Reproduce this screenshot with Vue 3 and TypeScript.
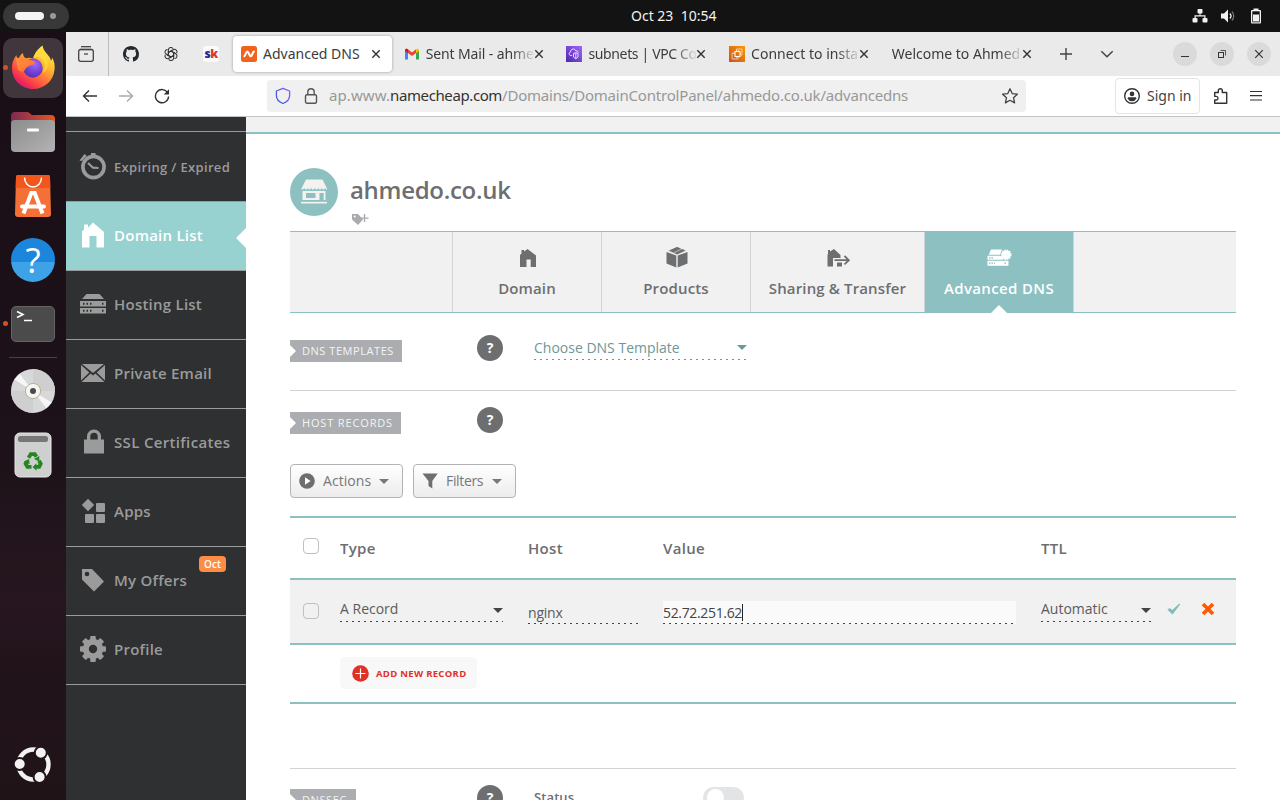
<script setup lang="ts">
import { ref } from 'vue'

interface MenuItem {
  label: string
  icon: string
  cls?: string
  badge?: string
}

interface BrowserTab {
  title: string
  icon: string
  cls: string
}

const browserTabs: BrowserTab[] = [
  { title: 'Advanced DNS', icon: 'namecheap', cls: 'active' },
  { title: 'Sent Mail - ahme', icon: 'gmail', cls: 'mail' },
  { title: 'subnets | VPC Co', icon: 'vpc', cls: 'vpc' },
  { title: 'Connect to insta', icon: 'ec2', cls: 'ec2' },
  { title: 'Welcome to Ahmed', icon: '', cls: 'plain' },
]

const menu: MenuItem[] = [
  { label: 'Expiring / Expired', icon: 'clock', cls: 'small' },
  { label: 'Domain List', icon: 'home', cls: 'current' },
  { label: 'Hosting List', icon: 'server' },
  { label: 'Private Email', icon: 'mail' },
  { label: 'SSL Certificates', icon: 'lock', cls: 'wide' },
  { label: 'Apps', icon: 'apps' },
  { label: 'My Offers', icon: 'tag', badge: 'Oct' },
  { label: 'Profile', icon: 'gear' },
]

const domainTabs = [
  { label: 'Domain', icon: 'home', cls: 'w149' },
  { label: 'Products', icon: 'box', cls: 'w149' },
  { label: 'Sharing & Transfer', icon: 'share', cls: 'w174' },
  { label: 'Advanced DNS', icon: 'dns', cls: 'w149 on' },
]

const recordValue = ref('52.72.251.62')
const teeth = [0, 45, 90, 135, 180, 225, 270, 315]
</script>

<template>
  <div class="desktop">
    <header class="topbar">
      <div class="workspaces"><i class="pill"></i><i class="dot"></i></div>
      <div class="clock">Oct 23&nbsp; 10:54</div>
      <div class="tray">
        <svg width="16" height="16" viewBox="0 0 16 16" fill="#f2f2f2">
          <rect x="5.5" y="1" width="5" height="4.5" rx="1" /><rect x="0.5" y="10" width="5" height="4.5" rx="1" /><rect x="10.5" y="10" width="5" height="4.5" rx="1" />
          <path d="M7.5 5h1v2.3h5V10h-1.2V8.6H3.7V10H2.500V7.300h5z" />
        </svg>
        <svg width="16" height="16" viewBox="0 0 16 16" fill="none">
          <path d="M1 5.500h3L8 1.500v13L4 10.500H1z" fill="#f2f2f2" />
          <path d="M9.800 5.500a3.600 3.600 0 0 1 0 5" stroke="#f2f2f2" stroke-width="1.300" />
          <path d="M11.800 3.500a6.200 6.200 0 0 1 0 9" stroke="#777" stroke-width="1.200" />
        </svg>
        <svg width="16" height="16" viewBox="0 0 16 16">
          <path d="M5.500 .5h5v1.500H12a1 1 0 0 1 1 1v11.500a1 1 0 0 1-1 1H4a1 1 0 0 1-1-1V3a1 1 0 0 1 1-1h1.500z" fill="#f2f2f2" />
          <rect x="4.300" y="3.300" width="7.400" height="11" fill="#131313" /><rect x="5" y="6.500" width="6" height="7" fill="#f2f2f2" />
        </svg>
      </div>
    </header>

    <div class="workarea">
      <nav class="dock">
        <div class="app running focused">
          <svg width="60" height="60" viewBox="0 0 60 60">
            <defs>
              <linearGradient id="fx1" x1=".85" y1=".05" x2=".2" y2=".95"><stop offset="0" stop-color="#fff44f" /><stop offset=".35" stop-color="#ffb52e" /><stop offset=".6" stop-color="#ff7139" /><stop offset=".85" stop-color="#f5334e" /><stop offset="1" stop-color="#d9127b" /></linearGradient>
              <radialGradient id="fx2" cx=".6" cy=".3" r=".8"><stop offset="0" stop-color="#a267ff" /><stop offset=".6" stop-color="#6b3fd0" /><stop offset="1" stop-color="#4d2fa5" /></radialGradient>
              <linearGradient id="fx3" x1="0" y1="0" x2="1" y2="1"><stop offset="0" stop-color="#ff9640" /><stop offset="1" stop-color="#ff6a2b" /></linearGradient>
            </defs>
            <path d="M9 30c0-6 2.500-10 4.200-13 .5 2.500 1.500 3.500 2.500 4C16 18.500 17.500 16.500 20 15c0 2.500 1 4.300 3 5.300 2.500-.8 5-.7 7.500.2C31 15 35 11 39.500 7.500c1 5.500 4.500 8 7 11.500.8 1.200 1.300 2.500 1.500 4 .6-.8 1-2 1-3.500 2.500 4 3 8 2.500 12C50.500 43 41.500 51 30 51S9 42 9 30z" fill="url(#fx1)" />
            <circle cx="30" cy="30" r="9.700" fill="url(#fx2)" />
            <path d="M13 19.500c2.500.6 5 .8 9.500 1.300 3 .4 4 1 6.500 1.700 3 .8 3.300 1.500 2.800 2.700-1 2-3.700 1.800-5.800 2.800-3 1.800-4.500 3-4.500 5-2.500 1-5 .5-7-2z" fill="url(#fx3)" />
            <path d="M30 20.300c4-3 9-1 11 3.500 1.500 3.500 1 8-1.500 11.500 4-2 6.500-7 5-13-1.200-4-4.500-7-5-13C35 12.500 31 16 30 20.300z" fill="#ffdf3e" opacity=".75" />
          </svg>
        </div>
        <div class="app">
          <svg width="46" height="42" viewBox="0 0 46 42">
            <defs><linearGradient id="fl" x1="0" y1="0" x2="1" y2="0"><stop offset="0" stop-color="#7c2a55" /><stop offset="1" stop-color="#e95420" /></linearGradient><linearGradient id="fg" x1="0" y1="0" x2="1" y2="1"><stop offset="0" stop-color="#8c8c8c" /><stop offset="1" stop-color="#b3b3b3" /></linearGradient></defs>
            <path d="M1 5a4 4 0 0 1 4-4h13l4 3h19a4 4 0 0 1 4 4v16H1z" fill="url(#fl)" />
            <rect x="1" y="9" width="44" height="32" rx="4" fill="url(#fg)" /><rect x="17" y="17.500" width="12" height="3" rx="1" fill="#fff" />
          </svg>
        </div>
        <div class="app">
          <svg width="38" height="44" viewBox="0 0 38 44">
            <path d="M4 1h30a2 2 0 0 1 2 2l1 37a3 3 0 0 1-3 3H4a3 3 0 0 1-3-3L2 3a2 2 0 0 1 2-2z" fill="#f47037" /><path d="M4 1h30a2 2 0 0 1 2 2l.3 11H1.700L2 3a2 2 0 0 1 2-2z" fill="#f2561c" />
            <path d="M10.500 3.500a8.500 9.500 0 0 0 17 0" fill="none" stroke="#fff" stroke-width="1.500" />
            <path d="M9.500 39.500 17.300 19h3.400l7.800 20.500" fill="none" stroke="#fff" stroke-width="4" /><path d="M8 32.500h22" stroke="#fff" stroke-width="4" stroke-linecap="round" />
          </svg>
        </div>
        <div class="app">
          <div class="help-app">?</div>
        </div>
        <div class="app running">
          <svg width="46" height="38" viewBox="0 0 46 38"><rect x="1.500" y="1.500" width="43" height="35" rx="4.500" fill="#4b4b4b" stroke="#656565" /><path d="m7 6.500 6 3-6 3M14 15.500h8" fill="none" stroke="#fff" stroke-width="1.600" /></svg>
        </div>
        <i class="dock-line"></i>
        <div class="app">
          <svg width="46" height="46" viewBox="0 0 46 46">
            <circle cx="23" cy="23" r="22" fill="#d8d8d8" /><path d="M23 23 23 1A22 22 0 0 1 45 23zM23 23v22A22 22 0 0 1 1 23z" fill="#cfcfcf" /><path d="M23 23 4.200 11.500 9.500 5.800zM23 23 41.800 34.500 36.500 40.200z" fill="#f6f6f6" />
            <circle cx="23" cy="23" r="7.600" fill="#f5f5f3" stroke="#b9b096" /><circle cx="23" cy="23" r="3" fill="#4a4a4a" />
          </svg>
        </div>
        <div class="app">
          <svg width="38" height="46" viewBox="0 0 38 46">
            <rect x="1" y="1" width="36" height="44" rx="5" fill="#cfcfcf" stroke="#e6e6e6" /><rect x="4" y="4" width="30" height="6" rx="2.500" fill="#777" />
            <g fill="none" stroke="#23861f" stroke-width="3.800"><path d="m14.500 25.800 2.300-3.600h4l1.600 2.500" /><path d="m25 28.800 1.700 2.900-1.600 3.200h-3" /><path d="M17.500 34.900h-4l-1.900-3.200 1-1.700" /></g>
            <path d="m20 27 5.300-3v5.500zM22.500 31.200v7.500l-4-3.700zM9.800 29.500l5.200-2.600.6 5.400z" fill="#23861f" />
          </svg>
        </div>
        <div class="app bottom">
          <svg width="38" height="38" viewBox="0 0 38 38">
            <circle cx="19.500" cy="19.500" r="15" fill="none" stroke="#f2f2f2" stroke-width="4.400" />
            <g fill="#f2f2f2" stroke="#23141c" stroke-width="2"><circle cx="5.700" cy="19" r="6" /><circle cx="26.800" cy="7.800" r="6" /><circle cx="25.600" cy="32" r="6" /></g>
          </svg>
        </div>
      </nav>

      <main class="browser">
        <div class="tabstrip">
          <div class="recent">
            <svg width="18" height="18" viewBox="0 0 18 18" fill="none" stroke="#444" stroke-width="1.300"><path d="M4 1.700h10" /><path d="M3 4.500h12" /><rect x="1.700" y="4.500" width="14.600" height="11.800" rx="2" /><path d="M7 9h4" /></svg>
          </div>
          <div class="pins">
            <svg width="16" height="16" viewBox="0 0 16 16" fill="#24292f"><path d="M8 0C3.580 0 0 3.580 0 8c0 3.540 2.290 6.530 5.470 7.590.4.070.550-.170.550-.380 0-.190-.010-.820-.010-1.490-2.010.370-2.530-.490-2.690-.940-.090-.230-.480-.940-.820-1.130-.280-.150-.680-.520-.010-.530.630-.010 1.080.580 1.230.820.720 1.210 1.870.870 2.330.660.070-.520.280-.870.510-1.070-1.780-.200-3.640-.890-3.640-3.950 0-.870.310-1.590.820-2.150-.080-.200-.360-1.020.080-2.120 0 0 .670-.210 2.200.820.640-.180 1.320-.270 2-.270s1.360.090 2 .270c1.530-1.040 2.200-.820 2.200-.820.440 1.100.160 1.920.080 2.120.510.560.820 1.270.820 2.150 0 3.070-1.870 3.750-3.650 3.950.290.250.540.730.540 1.480 0 1.070-.010 1.930-.010 2.200 0 .210.150.460.550.380A8.010 8.010 0 0 0 16 8c0-4.420-3.580-8-8-8z" /></svg>
            <svg width="16" height="16" viewBox="-8.500 -8.500 17 17" fill="none" stroke="#333" stroke-width="1.100">
              <path v-for="a in [0, 60, 120, 180, 240, 300]" :key="a" :transform="`rotate(${a})`" d="M-2.800 -1.600V-4.200a2.800 2.800 0 0 1 5.200-1.400M-2.800 -1.600 0 -3.200 4 -1" />
            </svg>
            <div class="sk"><b>s</b><b class="k">k</b></div>
          </div>
          <div class="tabs">
            <div v-for="t in browserTabs" :key="t.title" class="tab" :class="t.cls">
              <svg v-if="t.icon === 'namecheap'" class="fav" width="16" height="16" viewBox="0 0 16 16"><rect width="16" height="16" rx="2.500" fill="#f1621e" /><path d="M3.300 10.300C4.500 10 5 5.600 6.300 5.600S8.500 10.300 9.800 10.300 11.500 5.800 12.900 5.600" fill="none" stroke="#fff" stroke-width="2.100" stroke-linecap="round" stroke-linejoin="round" /></svg>
              <svg v-else-if="t.icon === 'gmail'" class="fav" width="16" height="16" viewBox="0 0 16 16"><path d="M1 4v9.500h3V7z" fill="#4285f4" /><path d="M15 4v9.500h-3V7z" fill="#34a853" /><path d="M1 4.500c0-2 2-2.300 3-1.300l4 3.300 4-3.300V7l-4 3-4-3z" fill="#ea4335" /><path d="M12 3.200c1-1 3-.7 3 1.300V5l-3 2.200z" fill="#fbbc04" /><path d="M1 4.500c0-2 2-2.300 3-1.300v4L1 5z" fill="#c5221f" /></svg>
              <svg v-else-if="t.icon === 'vpc'" class="fav" width="16" height="16" viewBox="0 0 16 16"><defs><linearGradient id="vp" x1="0" y1="1" x2="1" y2="0"><stop offset="0" stop-color="#4d27aa" /><stop offset="1" stop-color="#a166ff" /></linearGradient></defs><rect width="16" height="16" fill="url(#vp)" /><path d="M6 9.500H4.500a1.800 1.800 0 0 1 0-3.500C4.500 2.500 9 2 10 5c1.500 0 2.500.5 2.500 1.500M7.500 7.500 9.800 6.700l2.200.8V11l-2.200 1.800L7.500 11zM9.800 7v5.500" fill="none" stroke="#fff" stroke-width=".8" /></svg>
              <svg v-else-if="t.icon === 'ec2'" class="fav" width="16" height="16" viewBox="0 0 16 16"><defs><linearGradient id="ec" x1="0" y1="1" x2="1" y2="0"><stop offset="0" stop-color="#c8511b" /><stop offset="1" stop-color="#f90" /></linearGradient></defs><rect width="16" height="16" fill="url(#ec)" /><rect x="6" y="5.500" width="5" height="5" fill="none" stroke="#fff" stroke-width="1.100" /><path d="M7.500 5V3H13v6h-1.500M5.500 7H3v6h6v-2M7.500 4v1M9.500 4v1M7.500 11v1M4.500 7.500H6M11 7.500h1" fill="none" stroke="#fff" stroke-width=".7" opacity=".85" /></svg>
              <span class="tab-title">{{ t.title }}</span>
              <svg class="close" width="10" height="10" viewBox="0 0 10 10" stroke="#333" stroke-width="1.400"><path d="m1.300 1.300 7.400 7.400M8.700 1.300 1.300 8.700" /></svg>
            </div>
          </div>
          <div class="strip-actions">
            <svg width="14" height="14" viewBox="0 0 14 14" stroke="#444" stroke-width="1.400"><path d="M7 1v12M1 7h12" /></svg>
            <svg width="14" height="14" viewBox="0 0 14 14" fill="none" stroke="#444" stroke-width="1.500"><path d="m1.300 4.200 5.700 5.500 5.700-5.500" /></svg>
          </div>
          <div class="window-buttons">
            <span><svg width="12" height="12" viewBox="0 0 12 12"><path d="M2 8.500h8" stroke="#333" /></svg></span>
            <span><svg width="12" height="12" viewBox="0 0 12 12" fill="none" stroke="#333"><rect x="2.500" y="4.500" width="5" height="5" /><path d="M4.500 2.500h5v5" stroke-width=".8" /></svg></span>
            <span><svg width="12" height="12" viewBox="0 0 12 12" stroke="#333" stroke-width="1.200"><path d="m2.200 2.200 7.600 7.600M9.800 2.200 2.200 9.800" /></svg></span>
          </div>
        </div>

        <div class="navbar">
          <div class="nav-buttons">
            <svg width="16" height="16" viewBox="0 0 16 16" fill="none" stroke="#333" stroke-width="1.400"><path d="M15 8H1.500M7 2.500 1.500 8 7 13.500" /></svg>
            <svg width="16" height="16" viewBox="0 0 16 16" fill="none" stroke="#aaa" stroke-width="1.400"><path d="M1 8h13.500M9 2.500 14.500 8 9 13.500" /></svg>
            <svg width="16" height="16" viewBox="0 0 16 16" fill="none" stroke="#333" stroke-width="1.400"><path d="M13.800 5a6.600 6.600 0 1 0 .8 3.500" /><path d="M15 1.200v5.300H9.700z" fill="#333" stroke="none" /></svg>
          </div>
          <div class="urlbar">
            <svg width="16" height="18" viewBox="0 0 16 18" fill="none"><defs><linearGradient id="sh" x1="0" y1="1" x2="1" y2="0"><stop offset="0" stop-color="#2a5bd8" /><stop offset="1" stop-color="#9059ff" /></linearGradient></defs><path d="M8 1.300 14.600 4v4.500c0 4-3.300 6.700-6.600 8-3.300-1.300-6.600-4-6.600-8V4z" stroke="url(#sh)" stroke-width="1.300" stroke-linejoin="round" /></svg>
            <svg class="lock" width="14" height="18" viewBox="0 0 14 18" fill="none" stroke="#555" stroke-width="1.400"><rect x="1.500" y="7.700" width="11" height="8.500" rx="1.500" /><path d="M3.800 7.500V5a3.200 3.200 0 0 1 6.400 0v2.500" /></svg>
            <p class="url"><span class="u1">ap.www.</span><span class="u2">namecheap.com</span><span class="u3">/Domains/DomainControlPanel/ahmedo.co.uk/advancedns</span></p>
            <svg class="star" width="18" height="18" viewBox="0 0 18 18" fill="none" stroke="#444" stroke-width="1.300" stroke-linejoin="round"><path d="m9 1.800 2.200 4.800 5.200.6-3.900 3.500 1.100 5.200L9 13.300l-4.600 2.600 1.100-5.200L1.600 7.200l5.200-.6z" /></svg>
          </div>
          <div class="signin">
            <svg width="18" height="18" viewBox="0 0 18 18"><circle cx="9" cy="9" r="7.300" fill="none" stroke="#333" stroke-width="1.400" /><circle cx="9" cy="6.900" r="2.300" fill="#333" /><path d="M4.500 11.500c0-.8.600-1.200 1.500-1.200h6c.9 0 1.500.4 1.500 1.200A5.300 5.300 0 0 1 9 14.300a5.300 5.300 0 0 1-4.500-2.800z" fill="#333" /></svg>
            <span>Sign in</span>
          </div>
          <svg class="ext" width="16" height="18" viewBox="0 0 16 18" fill="none" stroke="#333" stroke-width="1.400" stroke-linejoin="round"><path d="M1.700 5.500h3.600V3.700a2 2 0 0 1 4 0v1.800h4.400v10.800h-12v-3.300h1.500a1.800 1.800 0 0 0 0-3.600H1.700z" /></svg>
          <svg class="burger" width="14" height="14" viewBox="0 0 14 14" stroke="#333" stroke-width="1.200"><path d="M1 2.500h12M1 6.700h12M1 11h12" /></svg>
        </div>

        <div class="page">
          <aside class="sidebar">
            <div v-for="m in menu" :key="m.label" class="item" :class="m.cls">
              <svg width="30" height="30" viewBox="0 0 30 30" class="mi" fill="currentColor">
                <g v-if="m.icon === 'clock'"><path d="M13 1h4.500v3H13zM1.500 8.500 6.500 2l2.200 1.800L4 9z" /><circle cx="15.500" cy="15" r="10.600" fill="none" stroke="currentColor" stroke-width="3.600" /><path d="m10 11 5 4.700 5.500.3" fill="none" stroke="currentColor" stroke-width="2.200" /></g>
                <path v-else-if="m.icon === 'home'" d="M6 3.500h4v3.200L15 1.500l11 9.500v15.500h-7.500V15h-7v11.500H4V10.300L6 8.500z" />
                <g v-else-if="m.icon === 'server'"><path d="M8.500 4h13l4.500 5H4z" /><path fill-rule="evenodd" d="M2 11h26v5.500H2zm3 1.800v2h1.500v-2zm3.500 0v2H10v-2zm3.500 0v2h1.500v-2zm12 0v2h1.500v-2zM2 18h26v5.500H2zm3 1.800v2h1.500v-2zm3.500 0v2H10v-2zm3.500 0v2h1.500v-2zm12 0v2h1.500v-2z" /></g>
                <path v-else-if="m.icon === 'mail'" d="M4 5h22L15 14zM3 6l8.300 7.500L3 21.500zM27 6v15.500l-8.300-8zM12.600 14.500 15 16.500l2.400-2L26.500 23h-23z" />
                <path v-else-if="m.icon === 'lock'" fill-rule="evenodd" d="M6 11.500h3V8.500a7 7 0 0 1 14 0v3h3v14H6zm6.300 0h7.400v-3a3.700 3.700 0 0 0-7.400 0z" />
                <path v-else-if="m.icon === 'apps'" d="M10 1.700 16.200 8 10 14.200 3.800 8zM19 6h7a1 1 0 0 1 1 1v7a1 1 0 0 1-1 1h-7a1 1 0 0 1-1-1V7a1 1 0 0 1 1-1zM8 17h7a1 1 0 0 1 1 1v7a1 1 0 0 1-1 1H8a1 1 0 0 1-1-1v-7a1 1 0 0 1 1-1zM19 17h7a1 1 0 0 1 1 1v7a1 1 0 0 1-1 1h-7a1 1 0 0 1-1-1v-7a1 1 0 0 1 1-1z" />
                <path v-else-if="m.icon === 'tag'" fill-rule="evenodd" d="M4 3h10L26 15.500 16 25.500 4 13.500zm5 2.700a2.300 2.300 0 1 0 0 4.600 2.300 2.300 0 0 0 0-4.600z" />
                <g v-else transform="translate(0 -1)"><circle cx="15" cy="15" r="7.200" fill="none" stroke="currentColor" stroke-width="6" /><rect v-for="a in teeth" :key="a" x="12.200" y="2" width="5.600" height="5" rx="1" :transform="`rotate(${a} 15 15)`" /></g>
              </svg>
              <span class="label">{{ m.label }}</span>
              <b v-if="m.badge" class="badge">{{ m.badge }}</b>
            </div>
          </aside>

          <section class="content">
            <div class="band"></div>
            <div class="inner">
              <div class="domain-head">
                <div class="avatar">
                  <svg width="28" height="26" viewBox="0 0 28 26" fill="#f4f2f0"><path d="M6 .5h16.500L27 9.500H1.500z" /><path d="M1.500 9.800h25.500" stroke="#f4f2f0" stroke-width="1.500" stroke-dasharray="2 1.500" /><path fill-rule="evenodd" d="M2.500 12h23v9h-1.800v-7h-4.200v7h-17zM6 14v5h9.500v-5z" /><path d="M1 22.800h26v1.700H1z" /></svg>
                </div>
                <div>
                  <h1>ahmedo.co.uk</h1>
                  <svg class="addtag" width="18" height="13" viewBox="0 0 18 13" fill="#a9abae"><path fill-rule="evenodd" d="M1 1h6l5 5.500-5 5.500L1 6.500zm2.700 1.500a1 1 0 1 0 0 2 1 1 0 0 0 0-2z" /><path d="M12.800 1h1.400v3.500H17.500v1.200h-3.300V9h-1.400V5.700H10V4.500h2.800z" /></svg>
                </div>
              </div>

              <div class="dtabs">
                <div class="dtab w162"></div>
                <div v-for="d in domainTabs" :key="d.label" class="dtab" :class="d.cls">
                  <svg width="26" height="24" viewBox="0 0 26 24" class="di" fill="currentColor">
                    <path v-if="d.icon === 'home'" d="M7.500 4H10v1.500L13.500 3 22 9.500V21h-5.300v-7.500h-4.200V21H6V9l1.500-1.500z" />
                    <g v-else-if="d.icon === 'box'"><path d="m14 1 4 1.600-7.500 3.700L6.500 4.400zM19.500 3.200l2.700 1.100-8 4-2.500-1.300zM3.500 6l9.800 3.500v12L3.500 17.500zM24.500 6v11.500l-9.800 4v-12z" /><path d="m14 1 9 3.700-9 4L5 4.700z" opacity=".55" /></g>
                    <g v-else-if="d.icon === 'share'"><path d="M3 4h2v1.500L9 3l6.500 6v3H8v8.500H2.500V9l.5-1z" /><path d="M12 16.500h5v4h-5z" /><path d="M9.500 14.200h14M19.500 10l4.300 4.200-4.300 4.200" fill="none" stroke="currentColor" stroke-width="1.800" /></g>
                    <g v-else><path d="M5 3.500h11L14 8.800H2.800zM1.500 9.800H14l3 2v1.900H1.500zM1.500 14.700h21v5h-21z" /><path d="M3 17.200h6M18.500 17.200H20M3 11.900h5" stroke="#8cc0c1" stroke-width="1.300" stroke-dasharray="1.500 1" /><circle cx="20.200" cy="8.800" r="4.600" /><circle cx="20.200" cy="8.800" r="4.800" fill="none" stroke="currentColor" stroke-width="1.200" stroke-dasharray="1.500 1" /></g>
                  </svg>
                  <span>{{ d.label }}</span>
                </div>
              </div>

              <div class="row templates">
                <div class="ribbon dt">DNS TEMPLATES</div>
                <div class="help">?</div>
                <div class="select tmpl"><span>Choose DNS Template</span><i class="caret"></i></div>
              </div>

              <div class="row hosts">
                <div class="ribbon hr">HOST RECORDS</div>
                <div class="help">?</div>
              </div>

              <div class="buttons">
                <button class="btn act">
                  <svg width="16" height="16" viewBox="0 0 16 16"><circle cx="8" cy="8" r="7.800" fill="#6d6e70" /><path d="m6 4.300 5.500 3.700L6 11.700z" fill="#fff" /></svg>
                  <span>Actions</span><i class="caret"></i>
                </button>
                <button class="btn fil">
                  <svg width="16" height="16" viewBox="0 0 16 16"><path d="M.5.500h15.200L10.300 8v7.500L6.500 13V8z" fill="#6d6e70" /></svg>
                  <span>Filters</span><i class="caret"></i>
                </button>
              </div>

              <div class="table">
                <div class="tr th">
                  <i class="check"></i><b>Type</b><b>Host</b><b>Value</b><b>TTL</b>
                </div>
                <div class="tr rec">
                  <i class="check"></i>
                  <div class="select type"><span>A Record</span><i class="caret"></i></div>
                  <div class="field host">nginx</div>
                  <div class="field value"><span>{{ recordValue }}</span><i class="cursor"></i></div>
                  <div class="select ttl"><span>Automatic</span><i class="caret"></i></div>
                  <svg class="ok" width="14" height="13" viewBox="0 0 14 13"><path d="M.5 6.800 2.500 5l2.800 2L12 .8l1.300.5L5.500 11.500z" fill="#7dbcbb" /></svg>
                  <svg class="cancel" width="14" height="14" viewBox="0 0 14 14"><path d="m2 2 10 10M12 2 2 12" stroke="#ff5a00" stroke-width="3.600" /></svg>
                </div>
                <div class="add-row">
                  <button class="add">
                    <svg width="17" height="17" viewBox="0 0 17 17"><circle cx="8.500" cy="8.500" r="8.300" fill="#e03127" /><path d="M8.500 3.500v10M3.500 8.500h10" stroke="#fff" stroke-width="1.200" /></svg>
                    <span>ADD NEW RECORD</span>
                  </button>
                </div>
              </div>

              <div class="row dnssec">
                <div class="ribbon ds">DNSSEC</div>
                <div class="help">?</div>
                <b class="status">Status</b>
                <div class="toggle"><i></i></div>
              </div>
            </div>
          </section>
        </div>
      </main>
    </div>
  </div>
</template>

<style>
html, body { margin: 0; overflow: hidden; }
</style>

<style scoped>
* { box-sizing: border-box; }
.desktop { width: 1280px; height: 800px; overflow: hidden; background: #fff; font-family: "Open Sans", "Noto Sans", sans-serif; color: #6d6e70; }
svg { display: block; flex: none; }
h1, p { margin: 0; }

.topbar { height: 32px; background: #131313; display: grid; grid-template-columns: 300px 1fr 300px; align-items: center; color: #f2f2f2; font-family: "Noto Sans", sans-serif; }
.workspaces { margin-left: 3px; width: 66px; height: 26px; border-radius: 13px; background: #383838; display: flex; align-items: center; padding-left: 12px; gap: 6px; }
.pill { width: 29px; height: 8px; border-radius: 4px; background: #f4f4f4; }
.dot { width: 6px; height: 6px; border-radius: 50%; background: #999; }
.clock { justify-self: center; font-size: 14px; line-height: 30px; white-space: pre; padding-left: 68px; width: 154px; }
.clock { position: relative; margin-left: 0; }
.tray { display: flex; justify-content: flex-end; gap: 12px; padding-right: 16px; }

.workarea { display: flex; height: 768px; }
.dock { width: 66px; flex: none; background: linear-gradient(#190e15 0, #1d1219 420px, #27161f 570px, #22131b 630px, #201318 100%); display: flex; flex-direction: column; padding: 4px 0; }
.app { height: 64px; flex: none; display: flex; align-items: center; justify-content: center; position: relative; }
.running::before { content: ""; position: absolute; left: 3px; top: 29px; width: 5px; height: 5px; border-radius: 50%; background: #d9501e; }
.focused svg { background: #41363c; border-radius: 10px; }
.help-app { width: 44px; height: 44px; border-radius: 50%; background: linear-gradient(#1c85dc 0 54%, #3ea2e6 54% 100%); color: #fff; font-size: 35px; line-height: 44px; text-align: center; }
.dock-line { height: 1px; background: #4a4045; margin: 1px 9px; flex: none; }
.bottom { margin-top: auto; }

.browser { width: 1214px; }
.tabstrip { height: 44px; background: #eaeaea; display: flex; align-items: center; font-family: "Noto Sans", sans-serif; }
.recent { width: 43px; height: 44px; border-right: 1px solid #bcbcbc; display: flex; align-items: center; padding-left: 11px; }
.pins { width: 124px; display: flex; align-items: center; padding-left: 14px; gap: 24px; }
.sk { width: 16px; height: 16px; border-radius: 3px; background: #fafafa; font: 700 12px/15px "Open Sans", sans-serif; color: #1f2a9c; text-align: center; white-space: nowrap; letter-spacing: -.5px; }
.sk .k { color: #e0352f; }
.tabs { display: flex; gap: 3.700px; }
.tab { width: 159px; height: 36px; border-radius: 4px; padding-left: 8px; display: flex; align-items: center; font-size: 14px; color: #3c3c3c; white-space: nowrap; }
.tab.active { background: #fff; box-shadow: 0 0 3px rgba(0, 0, 0, .35); }
.fav { margin-right: 6px; }
.tab-title { width: 108px; overflow: hidden; line-height: 20px; margin-top: -1px; -webkit-mask-image: linear-gradient(90deg, #000 86px, transparent 110px); mask-image: linear-gradient(90deg, #000 86px, transparent 110px); }
.active .tab-title { -webkit-mask-image: none; mask-image: none; }
.mail .tab-title { letter-spacing: -.12px; }
.vpc .tab-title { letter-spacing: -.35px; }
.plain .tab-title { width: 130px; -webkit-mask-image: linear-gradient(90deg, #000 108px, transparent 132px); mask-image: linear-gradient(90deg, #000 108px, transparent 132px); }
.strip-actions { display: flex; gap: 27px; padding-left: 16px; }
.window-buttons { display: flex; gap: 13px; margin-left: 59px; }
.window-buttons span { width: 24px; height: 24px; border-radius: 50%; background: #dadada; display: flex; align-items: center; justify-content: center; }

.navbar { height: 41px; background: #fff; border-bottom: 1px solid #c3c3c5; display: flex; align-items: center; font-family: "Noto Sans", sans-serif; }
.nav-buttons { display: flex; gap: 20px; padding-left: 16px; width: 201px; }
.urlbar { width: 759px; height: 32px; border-radius: 4px; background: #f0f0f0; display: flex; align-items: center; padding-left: 8px; }
.lock { margin-left: 13px; }
.url { font-size: 15px; line-height: 22px; color: #989898; white-space: nowrap; margin: 0 0 3px 11px; width: 672px; }
.u1 { letter-spacing: .08px; }
.u2 { color: #333; letter-spacing: -.39px; }
.u3 { letter-spacing: -.2px; }
.signin { margin-left: 89px; width: 85px; height: 36px; border: 1px solid #e4e4e4; border-radius: 4px; display: flex; align-items: center; padding-left: 7px; gap: 6px; font-size: 14px; color: #444; }
.signin span { margin-top: -1px; white-space: nowrap; }
.ext { margin-left: 13px; }
.burger { margin-left: 20px; }

.page { display: flex; height: 683px; }
.sidebar { width: 180px; flex: none; background: #2f3031; padding-top: 14px; }
.item { height: 69px; border-bottom: 1px solid #9b9b9b; color: #9b9b9b; display: flex; align-items: center; padding: 0 0 0 12px; font-size: 15px; font-weight: 600; position: relative; letter-spacing: .24px; }
.item:first-child { height: 71px; border-top: 1px solid #9b9b9b; font-size: 13px; letter-spacing: .34px; }
.item:first-child .label { margin-top: 0; }
.item.wide { letter-spacing: .34px; }
.mi { margin-right: 6px; }
.label { margin-top: -2px; white-space: nowrap; }
.item.current { background: #97d1d0; color: #fff; }
.item.current::after { content: ""; position: absolute; right: 0; top: 26px; border: 10px solid transparent; border-right-color: #fff; border-left: 0; }
.badge { position: absolute; left: 133px; top: 9px; width: 27px; height: 16px; border-radius: 4px; background: #ff8c44; color: #fff; font-size: 10px; font-weight: 600; line-height: 17px; text-align: center; letter-spacing: 0; }

.content { flex: 1; background: #fff; }
.band { height: 17px; background: #f1f1f1; border-bottom: 2px solid #8cc0c1; }
.inner { padding: 34px 44px 0; }
.domain-head { height: 63px; display: flex; gap: 12px; }
.avatar { width: 48px; height: 48px; border-radius: 50%; background: #8cc0c1; display: flex; align-items: center; justify-content: center; }
h1 { font-size: 24px; line-height: 44px; height: 45px; font-weight: 600; letter-spacing: -.3px; }
.addtag { margin-left: 1px; }
.dtabs { height: 82px; background: #f1f1f1; border: solid #8cc0c1; border-width: 1px 0; display: flex; }
.dtab { border-right: 1px solid #d2d3d5; display: flex; flex-direction: column; align-items: center; font-size: 15px; font-weight: 600; color: #6d6e70; white-space: nowrap; position: relative; letter-spacing: .14px; }
.di { margin: 14px 0 8px; }
.dtab span { line-height: 20px; }
.w162 { width: 163px; }
.w149 { width: 149px; }
.w174 { width: 174px; }
.on { background: #8cc0c1; color: #fff; letter-spacing: .36px; }
.on::after { content: ""; position: absolute; bottom: -1px; left: 66px; border: 8px solid transparent; border-bottom-color: #fff; border-top: 0; }

.row { display: flex; align-items: flex-start; }
.templates { height: 78px; border-bottom: 1px solid #d2d3d5; padding-top: 22px; }
.hosts { height: 73px; padding-top: 16px; }
.ribbon { height: 22px; margin-top: 5px; background: #abadb0; color: #f4f4f4; font-size: 11px; line-height: 21px; padding-left: 12px; position: relative; white-space: nowrap; flex: none; }
.ribbon::before { content: ""; position: absolute; left: 0; top: 5px; border: 6px solid transparent; border-left-color: #fff; border-right: 0; }
.dt { width: 112px; margin-right: 75px; letter-spacing: .55px; }
.hr { width: 111px; margin-right: 76px; letter-spacing: .85px; }
.ds { width: 66px; margin-right: 121px; margin-top: 4px; letter-spacing: .6px; }
.help { width: 26px; height: 26px; border-radius: 50%; background: #6d6e70; color: #fff; font-size: 14px; font-weight: 700; line-height: 26px; text-align: center; flex: none; }
.select, .field { font-size: 14px; color: #5a5b5d; background: repeating-linear-gradient(90deg, #444 0 2px, transparent 2px 6px) 0 100% / 100% 1px no-repeat; }
.select { display: flex; justify-content: space-between; align-items: center; white-space: nowrap; }
.caret { border: 5.500px solid transparent; border-top: 5.500px solid currentColor; border-bottom: 0; width: 0; height: 0; }
.tmpl { margin-left: 31px; width: 213px; height: 25px; color: #6d9799; background-image: repeating-linear-gradient(90deg, #6d9799 0 2px, transparent 2px 6px); }

.buttons { display: flex; gap: 10px; height: 52px; }
.btn { height: 34px; border: 1px solid #b3b3b5; border-radius: 4px; background: linear-gradient(#fff, #ececec); font: 400 14px "Open Sans", sans-serif; color: #77787a; display: flex; align-items: center; padding: 0 0 0 8px; }
.btn span { margin: -2px 0 0 8px; }
.act { width: 113px; }
.act span { width: 56px; letter-spacing: .05px; text-align: left; }
.fil { width: 103px; }
.fil span { width: 46px; letter-spacing: -.35px; text-align: left; }

.table { border-top: 2px solid #8cc0c1; border-bottom: 2px solid #8cc0c1; height: 188px; }
.tr { display: grid; grid-template-columns: 50px 188px 135px 378px 126px 34px 1fr; }
.th { height: 62px; border-bottom: 2px solid #8cc0c1; align-items: center; font-size: 15px; }
.th b { font-weight: 600; letter-spacing: .3px; }
.check { width: 16px; height: 16px; border: 1px solid #bfc0c1; border-radius: 4px; margin-left: 13px; }
.th .check { margin-top: -4px; background: #fff; }
.rec { height: 65px; background: #f1f1f1; border-bottom: 2px solid #8cc0c1; align-items: start; }
.rec .check { margin-top: 23px; }
.rec .caret { color: #444; }
.rec .select span { margin-top: -3px; }
.type { width: 163px; height: 24px; margin-top: 18px; }
.ttl { width: 110px; height: 24px; margin-top: 18px; }
.field { height: 23px; margin-top: 21px; display: flex; align-items: center; padding-bottom: 1px; }
.host { width: 110px; letter-spacing: -.2px; }
.value { width: 353px; background-color: #fafafa; color: #444; }
.value span { letter-spacing: -.34px; }
.cursor { width: 1px; height: 17px; background: #222; }
.ok { margin-top: 23px; }
.cancel { margin-top: 22px; }
.add-row { padding: 12px 0 0 50px; }
.add { width: 137px; height: 32px; border: 0; border-radius: 5px; background: #f8f8f8; color: #e03127; display: flex; align-items: center; gap: 7px; padding: 0 0 0 12px; font: 700 9.500px "Open Sans", sans-serif; letter-spacing: .3px; white-space: nowrap; }

.dnssec { margin-top: 64px; border-top: 1px solid #d2d3d5; padding-top: 16px; }
.status { margin-left: 31px; width: 169px; font-size: 13px; line-height: 25px; font-weight: 600; letter-spacing: .1px; }
.toggle { width: 41px; height: 21px; border-radius: 11px; background: #e3e4e5; margin-top: 2px; padding: 2px 4px; }
.toggle i { display: block; width: 17px; height: 17px; border-radius: 50%; background: #fff; }
</style>
